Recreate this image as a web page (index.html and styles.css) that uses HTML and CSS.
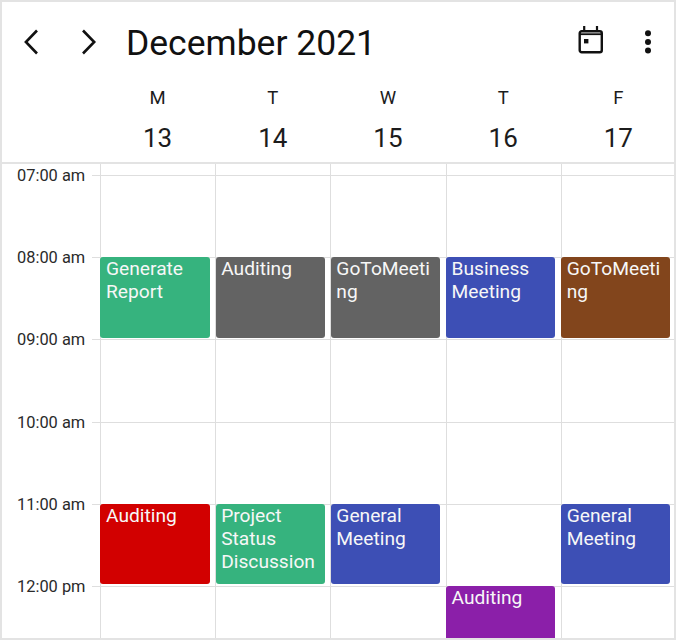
FILE: index.html
```html
<!DOCTYPE html>
<html lang="en">
<head>
<meta charset="utf-8">
<title>December 2021</title>
<link rel="stylesheet" href="styles.css">
</head>
<body>
<div class="frame">
  <header class="toolbar">
    <button class="icon-btn prev" aria-label="Previous">
      <svg width="16" height="26" viewBox="0 0 16 26"><path d="M14 1.5 2.9 13 14 24.5" fill="none" stroke="#111" stroke-width="2.6"/></svg>
    </button>
    <button class="icon-btn next" aria-label="Next">
      <svg width="16" height="26" viewBox="0 0 16 26"><path d="M2 1.5 13.2 13 2 24.5" fill="none" stroke="#111" stroke-width="2.6"/></svg>
    </button>
    <h1 class="title">December 2021</h1>
    <button class="icon-btn calendar" aria-label="Calendar">
      <svg width="26" height="28" viewBox="0 0 26 28"><rect x="2.7" y="5.2" width="22.1" height="21" rx="2" fill="none" stroke="#111" stroke-width="2.4"/><path d="M2.7 8.2h22.1" stroke="#111" stroke-width="1.8"/><path d="M7.2 0v5M20 0v5" stroke="#111" stroke-width="2.2"/><rect x="7" y="13" width="4.4" height="4.4" fill="#111"/></svg>
    </button>
    <button class="icon-btn more" aria-label="More">
      <svg width="8" height="26" viewBox="0 0 8 26"><circle cx="4" cy="4.3" r="3" fill="#111"/><circle cx="4" cy="13" r="3" fill="#111"/><circle cx="4" cy="21.6" r="3" fill="#111"/></svg>
    </button>
  </header>
  <div class="days">
    <div class="day"><span class="dow">M</span><span class="num">13</span></div>
    <div class="day"><span class="dow">T</span><span class="num">14</span></div>
    <div class="day"><span class="dow">W</span><span class="num">15</span></div>
    <div class="day"><span class="dow">T</span><span class="num">16</span></div>
    <div class="day"><span class="dow">F</span><span class="num">17</span></div>
  </div>
  <main class="schedule">
    <div class="times">
      <div class="time"><span>07:00 am</span></div>
      <div class="time"><span>08:00 am</span></div>
      <div class="time"><span>09:00 am</span></div>
      <div class="time"><span>10:00 am</span></div>
      <div class="time"><span>11:00 am</span></div>
      <div class="time"><span>12:00 pm</span></div>
    </div>
    <div class="grid">
      <div class="event green c1 r8">Generate Report</div>
      <div class="event gray c2 r8">Auditing</div>
      <div class="event gray c3 r8">GoToMeeting</div>
      <div class="event blue c4 r8">Business Meeting</div>
      <div class="event brown c5 r8">GoToMeeting</div>
      <div class="event red c1 r11">Auditing</div>
      <div class="event green c2 r11">Project Status Discussion</div>
      <div class="event blue c3 r11">General Meeting</div>
      <div class="event blue c5 r11">General Meeting</div>
      <div class="event purple c4 r12">Auditing</div>
    </div>
  </main>
</div>
</body>
</html>
```
FILE: styles.css
```css
* { box-sizing: border-box; }
html, body { margin: 0; padding: 0; background: #fff; }
body { font-family: Roboto, "Liberation Sans", sans-serif; color: #1c1c1c; }

.frame {
  width: 676px;
  height: 640px;
  border: 2px solid #e3e3e3;
  display: flex;
  flex-direction: column;
  overflow: hidden;
  background: #fff;
}

.toolbar {
  height: 80px;
  flex: none;
  display: flex;
  align-items: center;
}
.icon-btn {
  border: 0;
  padding: 0;
  background: none;
  display: flex;
  flex: none;
}
.prev { margin-left: 21px; }
.next { margin-left: 42px; }
.title {
  margin: 1px 0 0 29px;
  flex: 1;
  font-size: 35.5px;
  font-weight: 400;
  color: #111;
  line-height: 40px;
}
.calendar { margin: 0 41px 4px 0; }
.more { margin: 0 22px 1px 0; }

.days {
  height: 82px;
  flex: none;
  padding-left: 98px;
  display: grid;
  grid-template-columns: repeat(5, 115.2px);
  border-bottom: 2px solid #e3e3e3;
}
.day {
  display: flex;
  flex-direction: column;
  align-items: center;
}
.dow { font-size: 18.5px; line-height: 22px; margin-top: 5px; }
.num { font-size: 26px; line-height: 30px; margin-top: 14px; }

.schedule {
  flex: 1;
  min-height: 0;
  display: flex;
  overflow: hidden;
}
.times {
  width: 98px;
  flex: none;
  padding-top: 2px;
}
.time {
  height: 82.2px;
  display: flex;
  align-items: flex-start;
  padding-left: 15px;
  font-size: 16.4px;
  line-height: 20px;
  color: #2a2a2a;
}
.time span { white-space: nowrap; }
.time::after {
  content: "";
  flex: 1;
  height: 1px;
  margin: 9px 0 0 7px;
  background: #dedede;
}

.grid {
  flex: 1;
  display: grid;
  grid-template-columns: repeat(5, 115.2px);
  grid-template-rows: 11px repeat(6, 82.2px);
  background-color: #fff;
  background-image:
    repeating-linear-gradient(to right, #dedede 0, #dedede 1px, transparent 1px, transparent 115.2px),
    repeating-linear-gradient(to bottom, #dedede 0, #dedede 1px, transparent 1px, transparent 82.2px);
  background-size: 100% 100%, 100% calc(100% - 11px);
  background-position: 0 0, 0 11px;
  background-repeat: no-repeat;
}

.event {
  margin: 0.1px 5.6px 1.5px 0.4px;
  padding: 0 2px 0 5.6px;
  border-radius: 3px;
  color: #f7f7f7;
  font-size: 19.2px;
  line-height: 23px;
  overflow: hidden;
  overflow-wrap: anywhere;
  min-height: 0;
}
.c1 { grid-column: 1; }
.c2 { grid-column: 2; }
.c3 { grid-column: 3; }
.c4 { grid-column: 4; }
.c5 { grid-column: 5; }
.r8 { grid-row: 3; }
.r11 { grid-row: 6; }
.r12 { grid-row: 7; margin-bottom: 0; }

.green { background: #36b37e; }
.gray { background: #636363; }
.blue { background: #3d4fb5; }
.brown { background: #82451c; }
.red { background: #d20000; }
.purple { background: #8b1fa9; }
```
